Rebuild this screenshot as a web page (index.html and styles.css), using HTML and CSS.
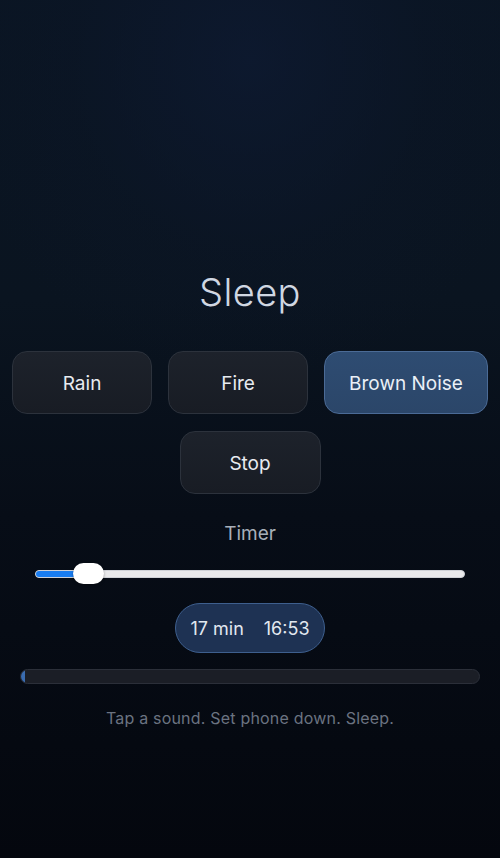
FILE: index.html
```html
<!DOCTYPE html>
<html lang="en">
<head>
<meta charset="utf-8">
<title>Sleep</title>
<link rel="stylesheet" href="styles.css">
</head>
<body>
<main class="app">
  <h1 class="title">Sleep</h1>
  <div class="sounds">
    <button class="btn">Rain</button>
    <button class="btn">Fire</button>
    <button class="btn btn-active">Brown Noise</button>
  </div>
  <div class="stop-row">
    <button class="btn">Stop</button>
  </div>
  <div class="timer-label">Timer</div>
  <div class="slider">
    <div class="track">
      <div class="fill" style="width: 52px"></div>
      <div class="thumb" style="left: 37px"></div>
    </div>
  </div>
  <div class="pill-row">
    <div class="pill"><span>17 min</span><span>16:53</span></div>
  </div>
  <div class="progress">
    <div class="progress-fill" style="width: 4px"></div>
  </div>
  <p class="hint">Tap a sound. Set phone down. Sleep.</p>
</main>
</body>
</html>
```
FILE: styles.css
```css
* { box-sizing: border-box; }
html, body {
  margin: 0;
  height: 100%;
}
body {
  font-family: Inter, "Noto Sans", "Liberation Sans", sans-serif;
  color: #e6e9ee;
  background:
    radial-gradient(ellipse 300px 320px at 50% 60px, rgba(14, 26, 50, 0.75) 0%, rgba(12, 22, 40, 0.35) 60%, rgba(10, 20, 34, 0) 100%),
    linear-gradient(180deg, #0a1523 0%, #0a1420 35%, #070d17 60%, #04070e 100%);
  min-height: 858px;
}
.app {
  display: flex;
  flex-direction: column;
  align-items: stretch;
  padding-top: 269px;
}
.title {
  margin: 0;
  text-align: center;
  font-weight: 300;
  font-size: 38px;
  line-height: 46px;
  color: #d0d7e2;
  letter-spacing: 0.4px;
}
.sounds {
  display: flex;
  justify-content: center;
  gap: 16px;
  margin-top: 36px;
}
.btn {
  font-family: inherit;
  min-width: 140px;
  height: 63px;
  padding: 2px 24px 0;
  border-radius: 15px;
  border: 1px solid #2c323c;
  background: linear-gradient(180deg, #1d222b 0%, #181c24 100%);
  color: #e8ebf0;
  font-size: 19px;
  font-weight: 400;
}
.btn-active {
  background: linear-gradient(180deg, #2e4c72 0%, #2b4669 100%);
  border-color: #4b6b96;
  color: #eaf0f7;
}
.stop-row {
  display: flex;
  justify-content: center;
  margin-top: 17px;
}
.stop-row .btn { width: 141px; }
.timer-label {
  margin-top: 28px;
  text-align: center;
  font-size: 19px;
  line-height: 24px;
  color: #a8afb9;
}
.slider {
  margin-top: 17px;
  padding: 0 35px;
  height: 21px;
  display: flex;
  align-items: center;
}
.track {
  position: relative;
  flex: 1;
  height: 8px;
  border-radius: 4px;
  background: #e9e9eb;
  border: 1px solid #cfd1d6;
}
.fill {
  height: 100%;
  border-radius: 4px 0 0 4px;
  background: #1a7df0;
}
.thumb {
  position: absolute;
  top: -8px;
  width: 31px;
  height: 21px;
  border-radius: 11px;
  background: #ffffff;
  box-shadow: 0 1px 3px rgba(0, 0, 0, 0.35);
}
.pill-row {
  display: flex;
  justify-content: center;
  margin-top: 19px;
}
.pill {
  display: flex;
  gap: 20px;
  align-items: center;
  justify-content: center;
  width: 150px;
  height: 50px;
  border-radius: 25px;
  background: #1e3253;
  border: 1px solid #3e5f8e;
  font-size: 18px;
  color: #e2e8f0;
}
.progress {
  margin: 16px 20px 0;
  height: 15px;
  border-radius: 8px;
  background: #1b1e26;
  border: 1px solid #2b2f39;
  overflow: hidden;
}
.progress-fill {
  height: 100%;
  background: #3a6cb0;
}
.hint {
  margin: 24px 0 0;
  text-align: center;
  font-size: 16px;
  line-height: 20px;
  color: #6b7381;
  letter-spacing: 0.2px;
}
```
